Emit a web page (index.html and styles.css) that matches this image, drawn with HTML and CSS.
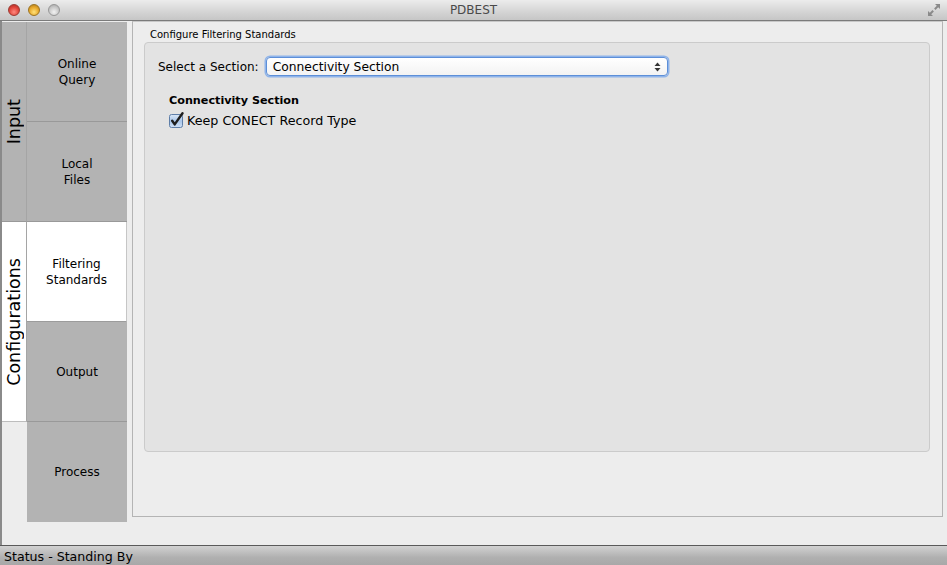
FILE: index.html
```html
<!DOCTYPE html>
<html>
<head>
<meta charset="utf-8">
<link rel="stylesheet" href="styles.css">
</head>
<body>
<div class="window">
  <div class="titlebar">
    <div class="lights">
      <span class="light red"></span>
      <span class="light yellow"></span>
      <span class="light grey"></span>
    </div>
    <div class="title">PDBEST</div>
    <svg class="fullscreen" width="14" height="14" viewBox="0 0 14 14">
      <path d="M8 1h5v5l-1.8-1.8-2.7 2.7-1.4-1.4 2.7-2.7z" fill="#8a8a8a"/>
      <path d="M6 13H1V8l1.8 1.8 2.7-2.7 1.4 1.4-2.7 2.7z" fill="#8a8a8a"/>
    </svg>
  </div>
  <div class="body">
    <div class="sidebar">
      <div class="group group-input">
        <div class="group-label"><span>Input</span></div>
        <div class="tabs">
          <div class="tab">Online<br>Query</div>
          <div class="tab">Local<br>Files</div>
        </div>
      </div>
      <div class="group group-config">
        <div class="group-label"><span>Configurations</span></div>
        <div class="tabs">
          <div class="tab active">Filtering<br>Standards</div>
          <div class="tab">Output</div>
        </div>
      </div>
      <div class="group group-none">
        <div class="group-label empty"></div>
        <div class="tabs">
          <div class="tab">Process</div>
        </div>
      </div>
    </div>
    <div class="main">
      <div class="panel">
        <div class="fieldset-title">Configure Filtering Standards</div>
        <div class="fieldset">
          <div class="row">
            <span class="label">Select a Section:</span>
            <div class="combo">
              <span class="combo-text">Connectivity Section</span>
              <svg class="combo-arrows" width="7" height="10" viewBox="0 0 7 10">
                <path d="M3.5 0.5L6.5 4H0.5z" fill="#333"/>
                <path d="M3.5 9.5L6.5 6H0.5z" fill="#333"/>
              </svg>
            </div>
          </div>
          <div class="section">
            <div class="section-title">Connectivity Section</div>
            <label class="check">
              <svg class="checkbox" width="17" height="17" viewBox="0 0 17 17">
                <defs>
                  <linearGradient id="cb" x1="0" y1="0" x2="0" y2="1">
                    <stop offset="0" stop-color="#dbe8f7"/>
                    <stop offset="0.5" stop-color="#a9c6ea"/>
                    <stop offset="1" stop-color="#cfe0f5"/>
                  </linearGradient>
                </defs>
                <rect x="1.5" y="2.5" width="13" height="13" rx="2" fill="url(#cb)" stroke="#5e7ea8"/>
                <path d="M4.2 8.8l2.5 3.6L14.5 1.3" fill="none" stroke="#1e1e1e" stroke-width="2.4" stroke-linecap="round" stroke-linejoin="round"/>
              </svg>
              <span>Keep CONECT Record Type</span>
            </label>
          </div>
        </div>
      </div>
    </div>
  </div>
  <div class="statusbar">Status - Standing By</div>
</div>
</body>
</html>
```

FILE: styles.css
```css
* { box-sizing: border-box; }
html, body {
  margin: 0;
  padding: 0;
  width: 947px;
  height: 565px;
  overflow: hidden;
  font-family: "DejaVu Sans", "Liberation Sans", sans-serif;
  font-size: 12px;
  color: #000;
}
.window {
  width: 947px;
  height: 565px;
  display: flex;
  flex-direction: column;
  background: #ededed;
}
.titlebar {
  height: 21px;
  flex: none;
  background: linear-gradient(#ececec, #d4d4d4 60%, #c6c6c6);
  border-bottom: 1px solid #7b7b7b;
  display: flex;
  align-items: center;
  position: relative;
}
.lights {
  display: flex;
  gap: 8px;
  padding-left: 8px;
}
.light {
  width: 12px;
  height: 12px;
  border-radius: 50%;
  display: block;
}
.red { background: radial-gradient(circle at 50% 70%, #ff8a80, #e0443a 55%, #a82a22); border: 1px solid #9c3a33; }
.yellow { background: radial-gradient(circle at 50% 70%, #ffe27a, #e7a729 55%, #a8761a); border: 1px solid #9b7320; }
.grey { background: radial-gradient(circle at 50% 70%, #f2f2f2, #c9c9c9 55%, #a2a2a2); border: 1px solid #979797; }
.title {
  position: absolute;
  left: 0;
  right: 0;
  text-align: center;
  font-size: 12px;
  color: #4a4a4a;
  pointer-events: none;
}
.fullscreen {
  position: absolute;
  right: 6px;
  top: 3px;
}
.body {
  flex: 1;
  display: flex;
  min-height: 0;
  border-left: 2px solid #8a8a8a;
}
.sidebar {
  width: 125px;
  flex: none;
  display: flex;
  flex-direction: column;
  padding-top: 1px;
}
.group {
  display: flex;
}
.group-label {
  width: 25px;
  flex: none;
  border-right: 1px solid #a5a5a5;
  display: flex;
  align-items: center;
  justify-content: center;
  overflow: hidden;
}
.group-label span {
  writing-mode: vertical-rl;
  transform: rotate(180deg);
  font-size: 17.5px;
  white-space: nowrap;
}
.group-input .group-label { background: #b3b3b3; border-bottom: 1px solid #999; }
.group-config .group-label { background: #fff; border-bottom: 1px solid #bdbdbd; }
.group-label.empty { border-right: none; }
.tabs {
  width: 100px;
  display: flex;
  flex-direction: column;
}
.tab {
  height: 100px;
  background: #b3b3b3;
  border-bottom: 1px solid #999;
  display: flex;
  align-items: center;
  justify-content: center;
  text-align: center;
  line-height: 16px;
  font-size: 12px;
}
.tab:last-child { border-bottom: none; }
.group-input .tab:last-child { border-bottom: 1px solid #999; height: 100px; }
.tab.active {
  background: #fff;
  border-right: 1px solid #c6c6c6;
  border-bottom: 1px solid #9c9c9c;
}
.group-config .tab:last-child { height: 100px; border-bottom: 1px solid #999; }
.main {
  flex: 1;
  padding: 0 4px 28px 5px;
  display: flex;
}
.panel {
  flex: 1;
  border: 1px solid #b4b4b4;
  border-top-color: #c8c8c8;
  padding: 5px 12px 64px 11px;
  display: flex;
  flex-direction: column;
}
.fieldset-title {
  font-size: 10px;
  padding-left: 6px;
  height: 15px;
  line-height: 15px;
}
.fieldset {
  flex: 1;
  background: #e3e3e3;
  border: 1px solid #cbcbcb;
  border-radius: 4px;
  padding: 14px 12px 0 13px;
}
.row {
  display: flex;
  align-items: center;
  gap: 7px;
}
.label { font-size: 12px; }
.combo {
  width: 402px;
  height: 19px;
  border-radius: 4px;
  border: 1px solid #5d8fd8;
  box-shadow: 0 0 0 1.5px #8fb4ea;
  background: linear-gradient(#ffffff, #f3f3f3);
  display: flex;
  align-items: center;
  justify-content: space-between;
  padding: 0 6px 0 6px;
}
.combo-text { font-size: 12.3px; padding-top: 1px; }
.section {
  padding: 17px 0 0 11px;
}
.section-title {
  font-weight: bold;
  font-size: 11.2px;
  height: 16px;
  line-height: 16px;
}
.check {
  display: flex;
  align-items: center;
  gap: 2px;
  height: 20px;
  margin-top: 1px;
  margin-left: -1px;
  font-size: 12.7px;
}
.statusbar {
  height: 20px;
  flex: none;
  border-top: 1px solid #5a5a5a;
  background: linear-gradient(#d2d2d2, #b0b0b0 60%, #a8a8a8);
  padding-left: 4px;
  font-size: 12.6px;
  line-height: 21px;
}
```
